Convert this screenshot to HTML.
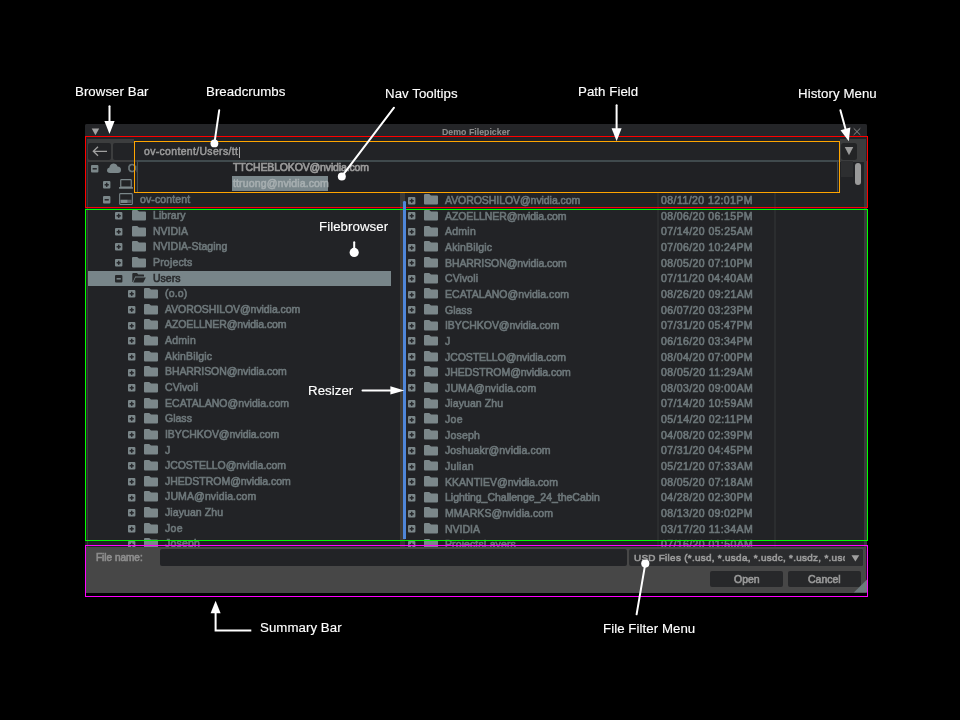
<!DOCTYPE html><html><head><meta charset="utf-8"><style>
*{margin:0;padding:0;box-sizing:border-box}
html,body{width:960px;height:720px;background:#000;overflow:hidden;position:relative;font-family:"Liberation Sans",sans-serif}
.abs{position:absolute}
.ann{position:absolute;color:#fff;font-size:13.25px;line-height:13px;white-space:nowrap;will-change:transform;-webkit-text-stroke-width:0.15px;letter-spacing:0.06px}
.ic{position:absolute;display:block}
.t{position:absolute;white-space:nowrap;font-size:10.5px;line-height:12px;color:#6d777a;-webkit-text-stroke-width:0.62px;will-change:transform}
.box{position:absolute;border:1px solid}
</style></head><body>

<div class="abs" style="left:85px;top:124px;width:782px;height:469px;background:#222326;border-radius:2px 2px 0 0"></div>
<div class="abs" style="left:85px;top:124px;width:782px;height:13px;background:#242528;border-radius:2px 2px 0 0"></div>
<div class="t" style="left:441.7px;top:126px;font-size:8.8px;font-weight:bold;-webkit-text-stroke-width:0.1px;color:#8c8c8c">Demo Filepicker</div>
<svg class="abs" style="left:91px;top:128px" width="9" height="8"><path d="M0.7 0.4 H8.2 L4.45 7.2 Z" fill="#a3a3a3"/></svg>
<svg class="abs" style="left:851.6px;top:127px" width="10" height="10"><path d="M1.7 1.3 L8.3 7.9 M8.3 1.3 L1.7 7.9" stroke="#8a8a8a" stroke-width="1"/></svg>
<div class="abs" style="left:87px;top:138.6px;width:779px;height:23.4px;background:#3c3d3e"></div>
<div class="abs" style="left:88px;top:143px;width:23px;height:17px;background:#222326;border-radius:2px"></div>
<div class="abs" style="left:113px;top:143px;width:22px;height:17px;background:#222326;border-radius:2px 0 0 2px"></div>
<div class="abs" style="left:134px;top:137px;width:706px;height:23px;background:#222326"></div>
<div class="abs" style="left:841.2px;top:142.5px;width:16.3px;height:17.2px;background:#232426;border-radius:2.5px"></div>
<svg class="abs" style="left:92px;top:146px" width="16" height="11"><path d="M15 5.3 H1.5 M6 0.8 L1.3 5.3 L6 9.8" fill="none" stroke="#a0a0a0" stroke-width="1.3"/></svg>
<svg class="abs" style="left:844px;top:146px" width="10" height="10"><path d="M0.75 1 H9.25 L5 9.25 Z" fill="#9b9b9b"/></svg>
<div class="t" style="left:143.5px;top:145.9px;font-size:10.4px;letter-spacing:0.37px;-webkit-text-stroke-width:0.5px;color:#9c9c9c">ov-content/Users/tt</div>
<div class="abs" style="left:239.2px;top:146.5px;width:1px;height:11px;background:#aaa"></div>
<div class="abs" style="left:87px;top:162px;width:314px;height:385px;overflow:hidden">
<svg class="ic" style="left:3.50px;top:3.20px" width="8" height="8" viewBox="0 0 8 8"><rect x="0" y="0" width="7.4" height="7.6" rx="1" fill="#7b878a"/><rect x="1.6" y="3.05" width="4.2" height="1.5" fill="#25272a"/></svg>
<svg class="ic" style="left:19.8px;top:1.0px" width="14" height="10" viewBox="0 0 14 10"><path d="M3 10 Q0 10 0 7.3 Q0 5 2.4 4.6 Q2.8 1.2 6.2 0.6 Q9.6 0.4 10.6 3.6 Q14 3.8 14 7 Q14 10 11 10 Z" fill="#7b878a"/></svg>
<div class="t" style="left:40.9px;top:0.0px;color:#6d777a;letter-spacing:0.02px">Omniverse</div>
<svg class="ic" style="left:15.95px;top:18.84px" width="8" height="8" viewBox="0 0 8 8"><rect x="0" y="0" width="7.4" height="7.6" rx="1" fill="#7b878a"/><rect x="1.6" y="3.05" width="4.2" height="1.5" fill="#25272a"/><rect x="2.95" y="1.7" width="1.5" height="4.2" fill="#25272a"/></svg>
<svg class="ic" style="left:32.2px;top:17.1px" width="14" height="10" viewBox="0 0 14 10"><rect x="1.75" y="0.65" width="10.5" height="7.4" rx="0.6" fill="none" stroke="#7b878a" stroke-width="1.15"/><rect x="0" y="8" width="14" height="1.8" rx="0.5" fill="#7b878a"/></svg>
<div class="t" style="left:53.3px;top:15.6px;color:#6d777a;letter-spacing:0.24px">localhost</div>
<svg class="ic" style="left:15.95px;top:34.48px" width="8" height="8" viewBox="0 0 8 8"><rect x="0" y="0" width="7.4" height="7.6" rx="1" fill="#7b878a"/><rect x="1.6" y="3.05" width="4.2" height="1.5" fill="#25272a"/></svg>
<svg class="ic" style="left:32.2px;top:31.3px" width="14" height="12" viewBox="0 0 14 12"><rect x="0.65" y="0.6" width="12.7" height="10.9" rx="0.9" fill="none" stroke="#7b878a" stroke-width="1.05"/><rect x="1.5" y="6.7" width="7.2" height="3.3" fill="#7b878a"/><rect x="8.7" y="6.7" width="3.8" height="3.3" fill="#7b878a" opacity="0.6"/></svg>
<div class="t" style="left:53.3px;top:31.3px;color:#6d777a;letter-spacing:0.13px">ov-content</div>
<svg class="ic" style="left:28.40px;top:50.12px" width="8" height="8" viewBox="0 0 8 8"><rect x="0" y="0" width="7.4" height="7.6" rx="1" fill="#7b878a"/><rect x="1.6" y="3.05" width="4.2" height="1.5" fill="#25272a"/><rect x="2.95" y="1.7" width="1.5" height="4.2" fill="#25272a"/></svg>
<svg class="ic" style="left:44.7px;top:47.8px" width="14" height="11" viewBox="0 0 14 11"><path d="M0 1 Q0 0 1 0 H5.2 L7 1.6 H13 Q14 1.6 14 2.6 V9.4 Q14 10.4 13 10.4 H1 Q0 10.4 0 9.4 Z" fill="#7b878a"/></svg>
<div class="t" style="left:65.8px;top:46.9px;color:#6d777a;letter-spacing:0.07px">Library</div>
<svg class="ic" style="left:28.40px;top:65.76px" width="8" height="8" viewBox="0 0 8 8"><rect x="0" y="0" width="7.4" height="7.6" rx="1" fill="#7b878a"/><rect x="1.6" y="3.05" width="4.2" height="1.5" fill="#25272a"/><rect x="2.95" y="1.7" width="1.5" height="4.2" fill="#25272a"/></svg>
<svg class="ic" style="left:44.7px;top:63.5px" width="14" height="11" viewBox="0 0 14 11"><path d="M0 1 Q0 0 1 0 H5.2 L7 1.6 H13 Q14 1.6 14 2.6 V9.4 Q14 10.4 13 10.4 H1 Q0 10.4 0 9.4 Z" fill="#7b878a"/></svg>
<div class="t" style="left:65.8px;top:62.6px;color:#6d777a;letter-spacing:0.00px">NVIDIA</div>
<svg class="ic" style="left:28.40px;top:81.40px" width="8" height="8" viewBox="0 0 8 8"><rect x="0" y="0" width="7.4" height="7.6" rx="1" fill="#7b878a"/><rect x="1.6" y="3.05" width="4.2" height="1.5" fill="#25272a"/><rect x="2.95" y="1.7" width="1.5" height="4.2" fill="#25272a"/></svg>
<svg class="ic" style="left:44.7px;top:79.1px" width="14" height="11" viewBox="0 0 14 11"><path d="M0 1 Q0 0 1 0 H5.2 L7 1.6 H13 Q14 1.6 14 2.6 V9.4 Q14 10.4 13 10.4 H1 Q0 10.4 0 9.4 Z" fill="#7b878a"/></svg>
<div class="t" style="left:65.8px;top:78.2px;color:#6d777a;letter-spacing:0.01px">NVIDIA-Staging</div>
<svg class="ic" style="left:28.40px;top:97.04px" width="8" height="8" viewBox="0 0 8 8"><rect x="0" y="0" width="7.4" height="7.6" rx="1" fill="#7b878a"/><rect x="1.6" y="3.05" width="4.2" height="1.5" fill="#25272a"/><rect x="2.95" y="1.7" width="1.5" height="4.2" fill="#25272a"/></svg>
<svg class="ic" style="left:44.7px;top:94.7px" width="14" height="11" viewBox="0 0 14 11"><path d="M0 1 Q0 0 1 0 H5.2 L7 1.6 H13 Q14 1.6 14 2.6 V9.4 Q14 10.4 13 10.4 H1 Q0 10.4 0 9.4 Z" fill="#7b878a"/></svg>
<div class="t" style="left:65.8px;top:93.8px;color:#6d777a;letter-spacing:0.18px">Projects</div>
<div class="abs" style="left:1px;top:108.7px;width:303px;height:15.6px;background:#788589"></div>
<svg class="ic" style="left:28.40px;top:112.68px" width="8" height="8" viewBox="0 0 8 8"><rect x="0" y="0" width="7.4" height="7.6" rx="1" fill="#27292b"/><rect x="1.6" y="3.05" width="4.2" height="1.5" fill="#7b878a"/></svg>
<svg class="ic" style="left:44.7px;top:111.0px" width="14" height="10" viewBox="0 0 14 10"><path d="M0.3 1 Q0.3 0 1.3 0 H5 L6.3 1.4 H11.5 Q12 1.4 12 2 V3.6 H3.2 L0.8 9 H0.3 Z" fill="#27292b"/><path d="M3.6 4.4 H13.8 L11.3 9.6 H1.3 Z" fill="#27292b"/></svg>
<div class="t" style="left:65.8px;top:109.5px;color:#2a2c2e;letter-spacing:-0.01px">Users</div>
<svg class="ic" style="left:40.85px;top:128.32px" width="8" height="8" viewBox="0 0 8 8"><rect x="0" y="0" width="7.4" height="7.6" rx="1" fill="#7b878a"/><rect x="1.6" y="3.05" width="4.2" height="1.5" fill="#25272a"/><rect x="2.95" y="1.7" width="1.5" height="4.2" fill="#25272a"/></svg>
<svg class="ic" style="left:57.1px;top:126.0px" width="14" height="11" viewBox="0 0 14 11"><path d="M0 1 Q0 0 1 0 H5.2 L7 1.6 H13 Q14 1.6 14 2.6 V9.4 Q14 10.4 13 10.4 H1 Q0 10.4 0 9.4 Z" fill="#7b878a"/></svg>
<div class="t" style="left:78.2px;top:125.1px;color:#6d777a;letter-spacing:0.16px">(o.o)</div>
<svg class="ic" style="left:40.85px;top:143.96px" width="8" height="8" viewBox="0 0 8 8"><rect x="0" y="0" width="7.4" height="7.6" rx="1" fill="#7b878a"/><rect x="1.6" y="3.05" width="4.2" height="1.5" fill="#25272a"/><rect x="2.95" y="1.7" width="1.5" height="4.2" fill="#25272a"/></svg>
<svg class="ic" style="left:57.1px;top:141.7px" width="14" height="11" viewBox="0 0 14 11"><path d="M0 1 Q0 0 1 0 H5.2 L7 1.6 H13 Q14 1.6 14 2.6 V9.4 Q14 10.4 13 10.4 H1 Q0 10.4 0 9.4 Z" fill="#7b878a"/></svg>
<div class="t" style="left:78.2px;top:140.8px;color:#6d777a;letter-spacing:-0.06px">AVOROSHILOV@nvidia.com</div>
<svg class="ic" style="left:40.85px;top:159.60px" width="8" height="8" viewBox="0 0 8 8"><rect x="0" y="0" width="7.4" height="7.6" rx="1" fill="#7b878a"/><rect x="1.6" y="3.05" width="4.2" height="1.5" fill="#25272a"/><rect x="2.95" y="1.7" width="1.5" height="4.2" fill="#25272a"/></svg>
<svg class="ic" style="left:57.1px;top:157.3px" width="14" height="11" viewBox="0 0 14 11"><path d="M0 1 Q0 0 1 0 H5.2 L7 1.6 H13 Q14 1.6 14 2.6 V9.4 Q14 10.4 13 10.4 H1 Q0 10.4 0 9.4 Z" fill="#7b878a"/></svg>
<div class="t" style="left:78.2px;top:156.4px;color:#6d777a;letter-spacing:-0.09px">AZOELLNER@nvidia.com</div>
<svg class="ic" style="left:40.85px;top:175.24px" width="8" height="8" viewBox="0 0 8 8"><rect x="0" y="0" width="7.4" height="7.6" rx="1" fill="#7b878a"/><rect x="1.6" y="3.05" width="4.2" height="1.5" fill="#25272a"/><rect x="2.95" y="1.7" width="1.5" height="4.2" fill="#25272a"/></svg>
<svg class="ic" style="left:57.1px;top:172.9px" width="14" height="11" viewBox="0 0 14 11"><path d="M0 1 Q0 0 1 0 H5.2 L7 1.6 H13 Q14 1.6 14 2.6 V9.4 Q14 10.4 13 10.4 H1 Q0 10.4 0 9.4 Z" fill="#7b878a"/></svg>
<div class="t" style="left:78.2px;top:172.0px;color:#6d777a;letter-spacing:0.25px">Admin</div>
<svg class="ic" style="left:40.85px;top:190.88px" width="8" height="8" viewBox="0 0 8 8"><rect x="0" y="0" width="7.4" height="7.6" rx="1" fill="#7b878a"/><rect x="1.6" y="3.05" width="4.2" height="1.5" fill="#25272a"/><rect x="2.95" y="1.7" width="1.5" height="4.2" fill="#25272a"/></svg>
<svg class="ic" style="left:57.1px;top:188.6px" width="14" height="11" viewBox="0 0 14 11"><path d="M0 1 Q0 0 1 0 H5.2 L7 1.6 H13 Q14 1.6 14 2.6 V9.4 Q14 10.4 13 10.4 H1 Q0 10.4 0 9.4 Z" fill="#7b878a"/></svg>
<div class="t" style="left:78.2px;top:187.7px;color:#6d777a;letter-spacing:0.17px">AkinBilgic</div>
<svg class="ic" style="left:40.85px;top:206.52px" width="8" height="8" viewBox="0 0 8 8"><rect x="0" y="0" width="7.4" height="7.6" rx="1" fill="#7b878a"/><rect x="1.6" y="3.05" width="4.2" height="1.5" fill="#25272a"/><rect x="2.95" y="1.7" width="1.5" height="4.2" fill="#25272a"/></svg>
<svg class="ic" style="left:57.1px;top:204.2px" width="14" height="11" viewBox="0 0 14 11"><path d="M0 1 Q0 0 1 0 H5.2 L7 1.6 H13 Q14 1.6 14 2.6 V9.4 Q14 10.4 13 10.4 H1 Q0 10.4 0 9.4 Z" fill="#7b878a"/></svg>
<div class="t" style="left:78.2px;top:203.3px;color:#6d777a;letter-spacing:-0.08px">BHARRISON@nvidia.com</div>
<svg class="ic" style="left:40.85px;top:222.16px" width="8" height="8" viewBox="0 0 8 8"><rect x="0" y="0" width="7.4" height="7.6" rx="1" fill="#7b878a"/><rect x="1.6" y="3.05" width="4.2" height="1.5" fill="#25272a"/><rect x="2.95" y="1.7" width="1.5" height="4.2" fill="#25272a"/></svg>
<svg class="ic" style="left:57.1px;top:219.9px" width="14" height="11" viewBox="0 0 14 11"><path d="M0 1 Q0 0 1 0 H5.2 L7 1.6 H13 Q14 1.6 14 2.6 V9.4 Q14 10.4 13 10.4 H1 Q0 10.4 0 9.4 Z" fill="#7b878a"/></svg>
<div class="t" style="left:78.2px;top:219.0px;color:#6d777a;letter-spacing:0.09px">CVivoli</div>
<svg class="ic" style="left:40.85px;top:237.80px" width="8" height="8" viewBox="0 0 8 8"><rect x="0" y="0" width="7.4" height="7.6" rx="1" fill="#7b878a"/><rect x="1.6" y="3.05" width="4.2" height="1.5" fill="#25272a"/><rect x="2.95" y="1.7" width="1.5" height="4.2" fill="#25272a"/></svg>
<svg class="ic" style="left:57.1px;top:235.5px" width="14" height="11" viewBox="0 0 14 11"><path d="M0 1 Q0 0 1 0 H5.2 L7 1.6 H13 Q14 1.6 14 2.6 V9.4 Q14 10.4 13 10.4 H1 Q0 10.4 0 9.4 Z" fill="#7b878a"/></svg>
<div class="t" style="left:78.2px;top:234.6px;color:#6d777a;letter-spacing:0.06px">ECATALANO@nvidia.com</div>
<svg class="ic" style="left:40.85px;top:253.44px" width="8" height="8" viewBox="0 0 8 8"><rect x="0" y="0" width="7.4" height="7.6" rx="1" fill="#7b878a"/><rect x="1.6" y="3.05" width="4.2" height="1.5" fill="#25272a"/><rect x="2.95" y="1.7" width="1.5" height="4.2" fill="#25272a"/></svg>
<svg class="ic" style="left:57.1px;top:251.1px" width="14" height="11" viewBox="0 0 14 11"><path d="M0 1 Q0 0 1 0 H5.2 L7 1.6 H13 Q14 1.6 14 2.6 V9.4 Q14 10.4 13 10.4 H1 Q0 10.4 0 9.4 Z" fill="#7b878a"/></svg>
<div class="t" style="left:78.2px;top:250.2px;color:#6d777a;letter-spacing:0.01px">Glass</div>
<svg class="ic" style="left:40.85px;top:269.08px" width="8" height="8" viewBox="0 0 8 8"><rect x="0" y="0" width="7.4" height="7.6" rx="1" fill="#7b878a"/><rect x="1.6" y="3.05" width="4.2" height="1.5" fill="#25272a"/><rect x="2.95" y="1.7" width="1.5" height="4.2" fill="#25272a"/></svg>
<svg class="ic" style="left:57.1px;top:266.8px" width="14" height="11" viewBox="0 0 14 11"><path d="M0 1 Q0 0 1 0 H5.2 L7 1.6 H13 Q14 1.6 14 2.6 V9.4 Q14 10.4 13 10.4 H1 Q0 10.4 0 9.4 Z" fill="#7b878a"/></svg>
<div class="t" style="left:78.2px;top:265.9px;color:#6d777a;letter-spacing:-0.05px">IBYCHKOV@nvidia.com</div>
<svg class="ic" style="left:40.85px;top:284.72px" width="8" height="8" viewBox="0 0 8 8"><rect x="0" y="0" width="7.4" height="7.6" rx="1" fill="#7b878a"/><rect x="1.6" y="3.05" width="4.2" height="1.5" fill="#25272a"/><rect x="2.95" y="1.7" width="1.5" height="4.2" fill="#25272a"/></svg>
<svg class="ic" style="left:57.1px;top:282.4px" width="14" height="11" viewBox="0 0 14 11"><path d="M0 1 Q0 0 1 0 H5.2 L7 1.6 H13 Q14 1.6 14 2.6 V9.4 Q14 10.4 13 10.4 H1 Q0 10.4 0 9.4 Z" fill="#7b878a"/></svg>
<div class="t" style="left:78.2px;top:281.5px;color:#6d777a;letter-spacing:0.79px">J</div>
<svg class="ic" style="left:40.85px;top:300.36px" width="8" height="8" viewBox="0 0 8 8"><rect x="0" y="0" width="7.4" height="7.6" rx="1" fill="#7b878a"/><rect x="1.6" y="3.05" width="4.2" height="1.5" fill="#25272a"/><rect x="2.95" y="1.7" width="1.5" height="4.2" fill="#25272a"/></svg>
<svg class="ic" style="left:57.1px;top:298.1px" width="14" height="11" viewBox="0 0 14 11"><path d="M0 1 Q0 0 1 0 H5.2 L7 1.6 H13 Q14 1.6 14 2.6 V9.4 Q14 10.4 13 10.4 H1 Q0 10.4 0 9.4 Z" fill="#7b878a"/></svg>
<div class="t" style="left:78.2px;top:297.2px;color:#6d777a;letter-spacing:-0.06px">JCOSTELLO@nvidia.com</div>
<svg class="ic" style="left:40.85px;top:316.00px" width="8" height="8" viewBox="0 0 8 8"><rect x="0" y="0" width="7.4" height="7.6" rx="1" fill="#7b878a"/><rect x="1.6" y="3.05" width="4.2" height="1.5" fill="#25272a"/><rect x="2.95" y="1.7" width="1.5" height="4.2" fill="#25272a"/></svg>
<svg class="ic" style="left:57.1px;top:313.7px" width="14" height="11" viewBox="0 0 14 11"><path d="M0 1 Q0 0 1 0 H5.2 L7 1.6 H13 Q14 1.6 14 2.6 V9.4 Q14 10.4 13 10.4 H1 Q0 10.4 0 9.4 Z" fill="#7b878a"/></svg>
<div class="t" style="left:78.2px;top:312.8px;color:#6d777a;letter-spacing:-0.02px">JHEDSTROM@nvidia.com</div>
<svg class="ic" style="left:40.85px;top:331.64px" width="8" height="8" viewBox="0 0 8 8"><rect x="0" y="0" width="7.4" height="7.6" rx="1" fill="#7b878a"/><rect x="1.6" y="3.05" width="4.2" height="1.5" fill="#25272a"/><rect x="2.95" y="1.7" width="1.5" height="4.2" fill="#25272a"/></svg>
<svg class="ic" style="left:57.1px;top:329.3px" width="14" height="11" viewBox="0 0 14 11"><path d="M0 1 Q0 0 1 0 H5.2 L7 1.6 H13 Q14 1.6 14 2.6 V9.4 Q14 10.4 13 10.4 H1 Q0 10.4 0 9.4 Z" fill="#7b878a"/></svg>
<div class="t" style="left:78.2px;top:328.4px;color:#6d777a;letter-spacing:0.13px">JUMA@nvidia.com</div>
<svg class="ic" style="left:40.85px;top:347.28px" width="8" height="8" viewBox="0 0 8 8"><rect x="0" y="0" width="7.4" height="7.6" rx="1" fill="#7b878a"/><rect x="1.6" y="3.05" width="4.2" height="1.5" fill="#25272a"/><rect x="2.95" y="1.7" width="1.5" height="4.2" fill="#25272a"/></svg>
<svg class="ic" style="left:57.1px;top:345.0px" width="14" height="11" viewBox="0 0 14 11"><path d="M0 1 Q0 0 1 0 H5.2 L7 1.6 H13 Q14 1.6 14 2.6 V9.4 Q14 10.4 13 10.4 H1 Q0 10.4 0 9.4 Z" fill="#7b878a"/></svg>
<div class="t" style="left:78.2px;top:344.1px;color:#6d777a;letter-spacing:0.08px">Jiayuan Zhu</div>
<svg class="ic" style="left:40.85px;top:362.92px" width="8" height="8" viewBox="0 0 8 8"><rect x="0" y="0" width="7.4" height="7.6" rx="1" fill="#7b878a"/><rect x="1.6" y="3.05" width="4.2" height="1.5" fill="#25272a"/><rect x="2.95" y="1.7" width="1.5" height="4.2" fill="#25272a"/></svg>
<svg class="ic" style="left:57.1px;top:360.6px" width="14" height="11" viewBox="0 0 14 11"><path d="M0 1 Q0 0 1 0 H5.2 L7 1.6 H13 Q14 1.6 14 2.6 V9.4 Q14 10.4 13 10.4 H1 Q0 10.4 0 9.4 Z" fill="#7b878a"/></svg>
<div class="t" style="left:78.2px;top:359.7px;color:#6d777a;letter-spacing:0.28px">Joe</div>
<svg class="ic" style="left:40.85px;top:378.56px" width="8" height="8" viewBox="0 0 8 8"><rect x="0" y="0" width="7.4" height="7.6" rx="1" fill="#7b878a"/><rect x="1.6" y="3.05" width="4.2" height="1.5" fill="#25272a"/><rect x="2.95" y="1.7" width="1.5" height="4.2" fill="#25272a"/></svg>
<svg class="ic" style="left:57.1px;top:376.3px" width="14" height="11" viewBox="0 0 14 11"><path d="M0 1 Q0 0 1 0 H5.2 L7 1.6 H13 Q14 1.6 14 2.6 V9.4 Q14 10.4 13 10.4 H1 Q0 10.4 0 9.4 Z" fill="#7b878a"/></svg>
<div class="t" style="left:78.2px;top:375.4px;color:#6d777a;letter-spacing:0.22px">Joseph</div>
</div>
<div class="abs" style="left:86.6px;top:161px;width:1.2px;height:386px;background:#3a3a3b"></div>
<div class="abs" style="left:400px;top:193px;width:5px;height:354px;background:#3b3a38"></div>
<div class="abs" style="left:406px;top:162px;width:460px;height:385px;overflow:hidden">
<div class="abs" style="left:251.4px;top:30px;width:1.4px;height:360px;background:#2b2d2f"></div>
<div class="abs" style="left:368.3px;top:30px;width:1.4px;height:360px;background:#2b2d2f"></div>
<svg class="ic" style="left:2.00px;top:34.70px" width="8" height="8" viewBox="0 0 8 8"><rect x="0" y="0" width="7.4" height="7.6" rx="1" fill="#7b878a"/><rect x="1.6" y="3.05" width="4.2" height="1.5" fill="#25272a"/><rect x="2.95" y="1.7" width="1.5" height="4.2" fill="#25272a"/></svg>
<svg class="ic" style="left:18.3px;top:32.4px" width="14" height="11" viewBox="0 0 14 11"><path d="M0 1 Q0 0 1 0 H5.2 L7 1.6 H13 Q14 1.6 14 2.6 V9.4 Q14 10.4 13 10.4 H1 Q0 10.4 0 9.4 Z" fill="#7b878a"/></svg>
<div class="t" style="left:39.3px;top:32.1px;letter-spacing:-0.06px">AVOROSHILOV@nvidia.com</div>
<div class="t" style="left:254.5px;top:32.1px;letter-spacing:0.434px">08/11/20 12:01PM</div>
<svg class="ic" style="left:2.00px;top:50.34px" width="8" height="8" viewBox="0 0 8 8"><rect x="0" y="0" width="7.4" height="7.6" rx="1" fill="#7b878a"/><rect x="1.6" y="3.05" width="4.2" height="1.5" fill="#25272a"/><rect x="2.95" y="1.7" width="1.5" height="4.2" fill="#25272a"/></svg>
<svg class="ic" style="left:18.3px;top:48.0px" width="14" height="11" viewBox="0 0 14 11"><path d="M0 1 Q0 0 1 0 H5.2 L7 1.6 H13 Q14 1.6 14 2.6 V9.4 Q14 10.4 13 10.4 H1 Q0 10.4 0 9.4 Z" fill="#7b878a"/></svg>
<div class="t" style="left:39.3px;top:47.7px;letter-spacing:-0.09px">AZOELLNER@nvidia.com</div>
<div class="t" style="left:254.5px;top:47.7px;letter-spacing:0.386px">08/06/20 06:15PM</div>
<svg class="ic" style="left:2.00px;top:65.98px" width="8" height="8" viewBox="0 0 8 8"><rect x="0" y="0" width="7.4" height="7.6" rx="1" fill="#7b878a"/><rect x="1.6" y="3.05" width="4.2" height="1.5" fill="#25272a"/><rect x="2.95" y="1.7" width="1.5" height="4.2" fill="#25272a"/></svg>
<svg class="ic" style="left:18.3px;top:63.7px" width="14" height="11" viewBox="0 0 14 11"><path d="M0 1 Q0 0 1 0 H5.2 L7 1.6 H13 Q14 1.6 14 2.6 V9.4 Q14 10.4 13 10.4 H1 Q0 10.4 0 9.4 Z" fill="#7b878a"/></svg>
<div class="t" style="left:39.3px;top:63.4px;letter-spacing:0.25px">Admin</div>
<div class="t" style="left:254.5px;top:63.4px;letter-spacing:0.400px">07/14/20 05:25AM</div>
<svg class="ic" style="left:2.00px;top:81.62px" width="8" height="8" viewBox="0 0 8 8"><rect x="0" y="0" width="7.4" height="7.6" rx="1" fill="#7b878a"/><rect x="1.6" y="3.05" width="4.2" height="1.5" fill="#25272a"/><rect x="2.95" y="1.7" width="1.5" height="4.2" fill="#25272a"/></svg>
<svg class="ic" style="left:18.3px;top:79.3px" width="14" height="11" viewBox="0 0 14 11"><path d="M0 1 Q0 0 1 0 H5.2 L7 1.6 H13 Q14 1.6 14 2.6 V9.4 Q14 10.4 13 10.4 H1 Q0 10.4 0 9.4 Z" fill="#7b878a"/></svg>
<div class="t" style="left:39.3px;top:79.0px;letter-spacing:0.17px">AkinBilgic</div>
<div class="t" style="left:254.5px;top:79.0px;letter-spacing:0.386px">07/06/20 10:24PM</div>
<svg class="ic" style="left:2.00px;top:97.26px" width="8" height="8" viewBox="0 0 8 8"><rect x="0" y="0" width="7.4" height="7.6" rx="1" fill="#7b878a"/><rect x="1.6" y="3.05" width="4.2" height="1.5" fill="#25272a"/><rect x="2.95" y="1.7" width="1.5" height="4.2" fill="#25272a"/></svg>
<svg class="ic" style="left:18.3px;top:95.0px" width="14" height="11" viewBox="0 0 14 11"><path d="M0 1 Q0 0 1 0 H5.2 L7 1.6 H13 Q14 1.6 14 2.6 V9.4 Q14 10.4 13 10.4 H1 Q0 10.4 0 9.4 Z" fill="#7b878a"/></svg>
<div class="t" style="left:39.3px;top:94.7px;letter-spacing:-0.08px">BHARRISON@nvidia.com</div>
<div class="t" style="left:254.5px;top:94.7px;letter-spacing:0.386px">08/05/20 07:10PM</div>
<svg class="ic" style="left:2.00px;top:112.90px" width="8" height="8" viewBox="0 0 8 8"><rect x="0" y="0" width="7.4" height="7.6" rx="1" fill="#7b878a"/><rect x="1.6" y="3.05" width="4.2" height="1.5" fill="#25272a"/><rect x="2.95" y="1.7" width="1.5" height="4.2" fill="#25272a"/></svg>
<svg class="ic" style="left:18.3px;top:110.6px" width="14" height="11" viewBox="0 0 14 11"><path d="M0 1 Q0 0 1 0 H5.2 L7 1.6 H13 Q14 1.6 14 2.6 V9.4 Q14 10.4 13 10.4 H1 Q0 10.4 0 9.4 Z" fill="#7b878a"/></svg>
<div class="t" style="left:39.3px;top:110.3px;letter-spacing:0.09px">CVivoli</div>
<div class="t" style="left:254.5px;top:110.3px;letter-spacing:0.449px">07/11/20 04:40AM</div>
<svg class="ic" style="left:2.00px;top:128.54px" width="8" height="8" viewBox="0 0 8 8"><rect x="0" y="0" width="7.4" height="7.6" rx="1" fill="#7b878a"/><rect x="1.6" y="3.05" width="4.2" height="1.5" fill="#25272a"/><rect x="2.95" y="1.7" width="1.5" height="4.2" fill="#25272a"/></svg>
<svg class="ic" style="left:18.3px;top:126.2px" width="14" height="11" viewBox="0 0 14 11"><path d="M0 1 Q0 0 1 0 H5.2 L7 1.6 H13 Q14 1.6 14 2.6 V9.4 Q14 10.4 13 10.4 H1 Q0 10.4 0 9.4 Z" fill="#7b878a"/></svg>
<div class="t" style="left:39.3px;top:125.9px;letter-spacing:0.06px">ECATALANO@nvidia.com</div>
<div class="t" style="left:254.5px;top:125.9px;letter-spacing:0.400px">08/26/20 09:21AM</div>
<svg class="ic" style="left:2.00px;top:144.18px" width="8" height="8" viewBox="0 0 8 8"><rect x="0" y="0" width="7.4" height="7.6" rx="1" fill="#7b878a"/><rect x="1.6" y="3.05" width="4.2" height="1.5" fill="#25272a"/><rect x="2.95" y="1.7" width="1.5" height="4.2" fill="#25272a"/></svg>
<svg class="ic" style="left:18.3px;top:141.9px" width="14" height="11" viewBox="0 0 14 11"><path d="M0 1 Q0 0 1 0 H5.2 L7 1.6 H13 Q14 1.6 14 2.6 V9.4 Q14 10.4 13 10.4 H1 Q0 10.4 0 9.4 Z" fill="#7b878a"/></svg>
<div class="t" style="left:39.3px;top:141.6px;letter-spacing:0.01px">Glass</div>
<div class="t" style="left:254.5px;top:141.6px;letter-spacing:0.386px">06/07/20 03:23PM</div>
<svg class="ic" style="left:2.00px;top:159.82px" width="8" height="8" viewBox="0 0 8 8"><rect x="0" y="0" width="7.4" height="7.6" rx="1" fill="#7b878a"/><rect x="1.6" y="3.05" width="4.2" height="1.5" fill="#25272a"/><rect x="2.95" y="1.7" width="1.5" height="4.2" fill="#25272a"/></svg>
<svg class="ic" style="left:18.3px;top:157.5px" width="14" height="11" viewBox="0 0 14 11"><path d="M0 1 Q0 0 1 0 H5.2 L7 1.6 H13 Q14 1.6 14 2.6 V9.4 Q14 10.4 13 10.4 H1 Q0 10.4 0 9.4 Z" fill="#7b878a"/></svg>
<div class="t" style="left:39.3px;top:157.2px;letter-spacing:-0.05px">IBYCHKOV@nvidia.com</div>
<div class="t" style="left:254.5px;top:157.2px;letter-spacing:0.386px">07/31/20 05:47PM</div>
<svg class="ic" style="left:2.00px;top:175.46px" width="8" height="8" viewBox="0 0 8 8"><rect x="0" y="0" width="7.4" height="7.6" rx="1" fill="#7b878a"/><rect x="1.6" y="3.05" width="4.2" height="1.5" fill="#25272a"/><rect x="2.95" y="1.7" width="1.5" height="4.2" fill="#25272a"/></svg>
<svg class="ic" style="left:18.3px;top:173.2px" width="14" height="11" viewBox="0 0 14 11"><path d="M0 1 Q0 0 1 0 H5.2 L7 1.6 H13 Q14 1.6 14 2.6 V9.4 Q14 10.4 13 10.4 H1 Q0 10.4 0 9.4 Z" fill="#7b878a"/></svg>
<div class="t" style="left:39.3px;top:172.9px;letter-spacing:0.79px">J</div>
<div class="t" style="left:254.5px;top:172.9px;letter-spacing:0.386px">06/16/20 03:34PM</div>
<svg class="ic" style="left:2.00px;top:191.10px" width="8" height="8" viewBox="0 0 8 8"><rect x="0" y="0" width="7.4" height="7.6" rx="1" fill="#7b878a"/><rect x="1.6" y="3.05" width="4.2" height="1.5" fill="#25272a"/><rect x="2.95" y="1.7" width="1.5" height="4.2" fill="#25272a"/></svg>
<svg class="ic" style="left:18.3px;top:188.8px" width="14" height="11" viewBox="0 0 14 11"><path d="M0 1 Q0 0 1 0 H5.2 L7 1.6 H13 Q14 1.6 14 2.6 V9.4 Q14 10.4 13 10.4 H1 Q0 10.4 0 9.4 Z" fill="#7b878a"/></svg>
<div class="t" style="left:39.3px;top:188.5px;letter-spacing:-0.06px">JCOSTELLO@nvidia.com</div>
<div class="t" style="left:254.5px;top:188.5px;letter-spacing:0.386px">08/04/20 07:00PM</div>
<svg class="ic" style="left:2.00px;top:206.74px" width="8" height="8" viewBox="0 0 8 8"><rect x="0" y="0" width="7.4" height="7.6" rx="1" fill="#7b878a"/><rect x="1.6" y="3.05" width="4.2" height="1.5" fill="#25272a"/><rect x="2.95" y="1.7" width="1.5" height="4.2" fill="#25272a"/></svg>
<svg class="ic" style="left:18.3px;top:204.4px" width="14" height="11" viewBox="0 0 14 11"><path d="M0 1 Q0 0 1 0 H5.2 L7 1.6 H13 Q14 1.6 14 2.6 V9.4 Q14 10.4 13 10.4 H1 Q0 10.4 0 9.4 Z" fill="#7b878a"/></svg>
<div class="t" style="left:39.3px;top:204.1px;letter-spacing:-0.02px">JHEDSTROM@nvidia.com</div>
<div class="t" style="left:254.5px;top:204.1px;letter-spacing:0.449px">08/05/20 11:29AM</div>
<svg class="ic" style="left:2.00px;top:222.38px" width="8" height="8" viewBox="0 0 8 8"><rect x="0" y="0" width="7.4" height="7.6" rx="1" fill="#7b878a"/><rect x="1.6" y="3.05" width="4.2" height="1.5" fill="#25272a"/><rect x="2.95" y="1.7" width="1.5" height="4.2" fill="#25272a"/></svg>
<svg class="ic" style="left:18.3px;top:220.1px" width="14" height="11" viewBox="0 0 14 11"><path d="M0 1 Q0 0 1 0 H5.2 L7 1.6 H13 Q14 1.6 14 2.6 V9.4 Q14 10.4 13 10.4 H1 Q0 10.4 0 9.4 Z" fill="#7b878a"/></svg>
<div class="t" style="left:39.3px;top:219.8px;letter-spacing:0.13px">JUMA@nvidia.com</div>
<div class="t" style="left:254.5px;top:219.8px;letter-spacing:0.400px">08/03/20 09:00AM</div>
<svg class="ic" style="left:2.00px;top:238.02px" width="8" height="8" viewBox="0 0 8 8"><rect x="0" y="0" width="7.4" height="7.6" rx="1" fill="#7b878a"/><rect x="1.6" y="3.05" width="4.2" height="1.5" fill="#25272a"/><rect x="2.95" y="1.7" width="1.5" height="4.2" fill="#25272a"/></svg>
<svg class="ic" style="left:18.3px;top:235.7px" width="14" height="11" viewBox="0 0 14 11"><path d="M0 1 Q0 0 1 0 H5.2 L7 1.6 H13 Q14 1.6 14 2.6 V9.4 Q14 10.4 13 10.4 H1 Q0 10.4 0 9.4 Z" fill="#7b878a"/></svg>
<div class="t" style="left:39.3px;top:235.4px;letter-spacing:0.08px">Jiayuan Zhu</div>
<div class="t" style="left:254.5px;top:235.4px;letter-spacing:0.400px">07/14/20 10:59AM</div>
<svg class="ic" style="left:2.00px;top:253.66px" width="8" height="8" viewBox="0 0 8 8"><rect x="0" y="0" width="7.4" height="7.6" rx="1" fill="#7b878a"/><rect x="1.6" y="3.05" width="4.2" height="1.5" fill="#25272a"/><rect x="2.95" y="1.7" width="1.5" height="4.2" fill="#25272a"/></svg>
<svg class="ic" style="left:18.3px;top:251.4px" width="14" height="11" viewBox="0 0 14 11"><path d="M0 1 Q0 0 1 0 H5.2 L7 1.6 H13 Q14 1.6 14 2.6 V9.4 Q14 10.4 13 10.4 H1 Q0 10.4 0 9.4 Z" fill="#7b878a"/></svg>
<div class="t" style="left:39.3px;top:251.1px;letter-spacing:0.28px">Joe</div>
<div class="t" style="left:254.5px;top:251.1px;letter-spacing:0.434px">05/14/20 02:11PM</div>
<svg class="ic" style="left:2.00px;top:269.30px" width="8" height="8" viewBox="0 0 8 8"><rect x="0" y="0" width="7.4" height="7.6" rx="1" fill="#7b878a"/><rect x="1.6" y="3.05" width="4.2" height="1.5" fill="#25272a"/><rect x="2.95" y="1.7" width="1.5" height="4.2" fill="#25272a"/></svg>
<svg class="ic" style="left:18.3px;top:267.0px" width="14" height="11" viewBox="0 0 14 11"><path d="M0 1 Q0 0 1 0 H5.2 L7 1.6 H13 Q14 1.6 14 2.6 V9.4 Q14 10.4 13 10.4 H1 Q0 10.4 0 9.4 Z" fill="#7b878a"/></svg>
<div class="t" style="left:39.3px;top:266.7px;letter-spacing:0.22px">Joseph</div>
<div class="t" style="left:254.5px;top:266.7px;letter-spacing:0.386px">04/08/20 02:39PM</div>
<svg class="ic" style="left:2.00px;top:284.94px" width="8" height="8" viewBox="0 0 8 8"><rect x="0" y="0" width="7.4" height="7.6" rx="1" fill="#7b878a"/><rect x="1.6" y="3.05" width="4.2" height="1.5" fill="#25272a"/><rect x="2.95" y="1.7" width="1.5" height="4.2" fill="#25272a"/></svg>
<svg class="ic" style="left:18.3px;top:282.6px" width="14" height="11" viewBox="0 0 14 11"><path d="M0 1 Q0 0 1 0 H5.2 L7 1.6 H13 Q14 1.6 14 2.6 V9.4 Q14 10.4 13 10.4 H1 Q0 10.4 0 9.4 Z" fill="#7b878a"/></svg>
<div class="t" style="left:39.3px;top:282.3px;letter-spacing:0.12px">Joshuakr@nvidia.com</div>
<div class="t" style="left:254.5px;top:282.3px;letter-spacing:0.386px">07/31/20 04:45PM</div>
<svg class="ic" style="left:2.00px;top:300.58px" width="8" height="8" viewBox="0 0 8 8"><rect x="0" y="0" width="7.4" height="7.6" rx="1" fill="#7b878a"/><rect x="1.6" y="3.05" width="4.2" height="1.5" fill="#25272a"/><rect x="2.95" y="1.7" width="1.5" height="4.2" fill="#25272a"/></svg>
<svg class="ic" style="left:18.3px;top:298.3px" width="14" height="11" viewBox="0 0 14 11"><path d="M0 1 Q0 0 1 0 H5.2 L7 1.6 H13 Q14 1.6 14 2.6 V9.4 Q14 10.4 13 10.4 H1 Q0 10.4 0 9.4 Z" fill="#7b878a"/></svg>
<div class="t" style="left:39.3px;top:298.0px;letter-spacing:0.23px">Julian</div>
<div class="t" style="left:254.5px;top:298.0px;letter-spacing:0.400px">05/21/20 07:33AM</div>
<svg class="ic" style="left:2.00px;top:316.22px" width="8" height="8" viewBox="0 0 8 8"><rect x="0" y="0" width="7.4" height="7.6" rx="1" fill="#7b878a"/><rect x="1.6" y="3.05" width="4.2" height="1.5" fill="#25272a"/><rect x="2.95" y="1.7" width="1.5" height="4.2" fill="#25272a"/></svg>
<svg class="ic" style="left:18.3px;top:313.9px" width="14" height="11" viewBox="0 0 14 11"><path d="M0 1 Q0 0 1 0 H5.2 L7 1.6 H13 Q14 1.6 14 2.6 V9.4 Q14 10.4 13 10.4 H1 Q0 10.4 0 9.4 Z" fill="#7b878a"/></svg>
<div class="t" style="left:39.3px;top:313.6px;letter-spacing:0.01px">KKANTIEV@nvidia.com</div>
<div class="t" style="left:254.5px;top:313.6px;letter-spacing:0.400px">08/05/20 07:18AM</div>
<svg class="ic" style="left:2.00px;top:331.86px" width="8" height="8" viewBox="0 0 8 8"><rect x="0" y="0" width="7.4" height="7.6" rx="1" fill="#7b878a"/><rect x="1.6" y="3.05" width="4.2" height="1.5" fill="#25272a"/><rect x="2.95" y="1.7" width="1.5" height="4.2" fill="#25272a"/></svg>
<svg class="ic" style="left:18.3px;top:329.6px" width="14" height="11" viewBox="0 0 14 11"><path d="M0 1 Q0 0 1 0 H5.2 L7 1.6 H13 Q14 1.6 14 2.6 V9.4 Q14 10.4 13 10.4 H1 Q0 10.4 0 9.4 Z" fill="#7b878a"/></svg>
<div class="t" style="left:39.3px;top:329.3px;letter-spacing:-0.02px">Lighting_Challenge_24_theCabin</div>
<div class="t" style="left:254.5px;top:329.3px;letter-spacing:0.386px">04/28/20 02:30PM</div>
<svg class="ic" style="left:2.00px;top:347.50px" width="8" height="8" viewBox="0 0 8 8"><rect x="0" y="0" width="7.4" height="7.6" rx="1" fill="#7b878a"/><rect x="1.6" y="3.05" width="4.2" height="1.5" fill="#25272a"/><rect x="2.95" y="1.7" width="1.5" height="4.2" fill="#25272a"/></svg>
<svg class="ic" style="left:18.3px;top:345.2px" width="14" height="11" viewBox="0 0 14 11"><path d="M0 1 Q0 0 1 0 H5.2 L7 1.6 H13 Q14 1.6 14 2.6 V9.4 Q14 10.4 13 10.4 H1 Q0 10.4 0 9.4 Z" fill="#7b878a"/></svg>
<div class="t" style="left:39.3px;top:344.9px;letter-spacing:0.06px">MMARKS@nvidia.com</div>
<div class="t" style="left:254.5px;top:344.9px;letter-spacing:0.386px">08/13/20 09:02PM</div>
<svg class="ic" style="left:2.00px;top:363.14px" width="8" height="8" viewBox="0 0 8 8"><rect x="0" y="0" width="7.4" height="7.6" rx="1" fill="#7b878a"/><rect x="1.6" y="3.05" width="4.2" height="1.5" fill="#25272a"/><rect x="2.95" y="1.7" width="1.5" height="4.2" fill="#25272a"/></svg>
<svg class="ic" style="left:18.3px;top:360.8px" width="14" height="11" viewBox="0 0 14 11"><path d="M0 1 Q0 0 1 0 H5.2 L7 1.6 H13 Q14 1.6 14 2.6 V9.4 Q14 10.4 13 10.4 H1 Q0 10.4 0 9.4 Z" fill="#7b878a"/></svg>
<div class="t" style="left:39.3px;top:360.5px;letter-spacing:0.00px">NVIDIA</div>
<div class="t" style="left:254.5px;top:360.5px;letter-spacing:0.449px">03/17/20 11:34AM</div>
<svg class="ic" style="left:2.00px;top:378.78px" width="8" height="8" viewBox="0 0 8 8"><rect x="0" y="0" width="7.4" height="7.6" rx="1" fill="#7b878a"/><rect x="1.6" y="3.05" width="4.2" height="1.5" fill="#25272a"/><rect x="2.95" y="1.7" width="1.5" height="4.2" fill="#25272a"/></svg>
<svg class="ic" style="left:18.3px;top:376.5px" width="14" height="11" viewBox="0 0 14 11"><path d="M0 1 Q0 0 1 0 H5.2 L7 1.6 H13 Q14 1.6 14 2.6 V9.4 Q14 10.4 13 10.4 H1 Q0 10.4 0 9.4 Z" fill="#7b878a"/></svg>
<div class="t" style="left:39.3px;top:376.2px;letter-spacing:0.10px">ProjectsLayers</div>
<div class="t" style="left:254.5px;top:376.2px;letter-spacing:0.400px">07/16/20 01:50AM</div>
</div>
<div class="abs" style="left:863.5px;top:161px;width:3px;height:386px;background:#3a3b3c"></div>
<div class="abs" style="left:841px;top:161px;width:12px;height:16px;background:#2d2e30"></div>
<div class="abs" style="left:855px;top:163px;width:6.3px;height:21.5px;background:#9a9a9a;border-radius:3px"></div>
<div class="abs" style="left:137px;top:160px;width:701px;height:31.5px;background:#202124"></div>
<div class="abs" style="left:137px;top:159.9px;width:701px;height:1.7px;background:#404a4d"></div>
<div class="abs" style="left:137px;top:160px;width:1.3px;height:31.5px;background:#434d51"></div>
<div class="abs" style="left:836.6px;top:160px;width:1.5px;height:31.5px;background:#434d51"></div>
<div class="t" style="left:233px;top:161.2px;color:#9a9a9a;letter-spacing:-0.144px;-webkit-text-stroke-width:0.7px">TTCHEBLOKOV@nvidia.com</div>
<div class="abs" style="left:232px;top:176.3px;width:96.3px;height:14.5px;background:#7a878b"></div>
<div class="t" style="left:232.5px;top:177.4px;color:#a6aeb0;letter-spacing:0.135px">ttruong@nvidia.com</div>
<div class="abs" style="left:86px;top:547px;width:780px;height:46px;background:#474747"></div>
<div class="t" style="left:96px;top:551.5px;font-size:10px;color:#8e8e8e">File name:</div>
<div class="abs" style="left:160.3px;top:549px;width:467px;height:17px;background:#222326;border-radius:2px"></div>
<div class="abs" style="left:629.4px;top:549px;width:234px;height:16.6px;background:#2b2c2e;border-radius:2px;overflow:hidden">
<div class="abs" style="left:0;top:0;width:215.8px;height:16.6px;overflow:hidden"><div class="t" style="left:5px;top:3px;font-size:9.9px;letter-spacing:0.3px;color:#9a9a9a">USD Files (*.usd, *.usda, *.usdc, *.usdz, *.usdc)</div></div>
<div class="abs" style="left:217.5px;top:0;width:17px;height:16.6px;background:#2b2c2e"></div>
<svg class="abs" style="left:222px;top:5.5px" width="9" height="8"><path d="M0.5 0.3 H8.3 L4.4 6.6 Z" fill="#a0a0a0"/></svg>
</div>
<div class="abs" style="left:709.8px;top:570.6px;width:73.2px;height:16.3px;background:#27282a;border-radius:2px"></div>
<div class="abs" style="left:788.2px;top:570.6px;width:73.2px;height:16.3px;background:#27282a;border-radius:2px"></div>
<div class="t" style="left:733.8px;top:572.6px;color:#9a9a9a">Open</div>
<div class="t" style="left:808.4px;top:572.6px;color:#9a9a9a">Cancel</div>
<svg class="abs" style="left:853px;top:579px" width="14" height="14"><path d="M0.8 13.5 L14 0.4 V13.5 Z" fill="#6d797c"/></svg>
<div class="box" style="left:85px;top:136px;width:783px;height:72px;border-color:#ff0000"></div>
<div class="box" style="left:134px;top:141px;width:706px;height:52px;border-color:#ffa500"></div>
<div class="box" style="left:85px;top:209px;width:783px;height:332px;border-color:#00ff00"></div>
<div class="box" style="left:85px;top:545px;width:783px;height:52px;border-color:#ff00ff"></div>
<div class="abs" style="left:403.2px;top:201px;width:2.5px;height:337.5px;background:#4f86d8;border-radius:1.2px 1.2px 0 0"></div>
<div class="ann" style="left:75.3px;top:84.7px">Browser Bar</div>
<div class="ann" style="left:206.1px;top:85.3px">Breadcrumbs</div>
<div class="ann" style="left:384.8px;top:86.7px">Nav Tooltips</div>
<div class="ann" style="left:577.9px;top:84.7px">Path Field</div>
<div class="ann" style="left:797.8px;top:86.5px">History Menu</div>
<div class="ann" style="left:318.9px;top:220.1px">Filebrowser</div>
<div class="ann" style="left:308.0px;top:384.2px">Resizer</div>
<div class="ann" style="left:259.8px;top:621.3px">Summary Bar</div>
<div class="ann" style="left:602.5px;top:621.8px">File Filter Menu</div>
<svg class="abs" style="left:0;top:0" width="960" height="720">
<line x1="109.5" y1="106.3" x2="109.5" y2="121.0" stroke="#ffffff" stroke-width="2" stroke-linecap="round"/><path d="M109.5 134 L104.40 121.00 L114.60 121.00 Z" fill="#ffffff"/>
<line x1="219.2" y1="110.3" x2="214.4" y2="143.4" stroke="#ffffff" stroke-width="2" stroke-linecap="round"/><circle cx="214.4" cy="143.4" r="3.9" fill="#ffffff"/>
<line x1="394" y1="107.7" x2="341.8" y2="176.4" stroke="#ffffff" stroke-width="2" stroke-linecap="round"/><circle cx="341.8" cy="176.4" r="4" fill="#ffffff"/>
<line x1="616.6" y1="105.3" x2="616.6" y2="128.2" stroke="#ffffff" stroke-width="2" stroke-linecap="round"/><path d="M616.6 141.2 L611.60 128.20 L621.60 128.20 Z" fill="#ffffff"/>
<line x1="840.4" y1="110.3" x2="845.4422454034228" y2="128.84825987687702" stroke="#ffffff" stroke-width="2" stroke-linecap="round"/><path d="M848.8 141.2 L840.52 130.19 L850.36 127.51 Z" fill="#ffffff"/>
<line x1="354.2" y1="242.2" x2="354.2" y2="252.4" stroke="#ffffff" stroke-width="2" stroke-linecap="round"/><circle cx="354.2" cy="252.4" r="4.6" fill="#ffffff"/>
<line x1="362.5" y1="390.4" x2="390.4" y2="390.4" stroke="#ffffff" stroke-width="2" stroke-linecap="round"/><path d="M404.4 390.4 L390.40 394.60 L390.40 386.20 Z" fill="#ffffff"/>
<path d="M251.3 630.5 H215.6 V612" fill="none" stroke="#fff" stroke-width="2"/>
<path d="M215.6 600.8 L210.6 613.3 L220.6 613.3 Z" fill="#fff"/>
<line x1="636.6" y1="614.3" x2="645.3" y2="563.6" stroke="#ffffff" stroke-width="2" stroke-linecap="round"/><circle cx="645.3" cy="563.6" r="4.1" fill="#ffffff"/>
</svg>
</body></html>
